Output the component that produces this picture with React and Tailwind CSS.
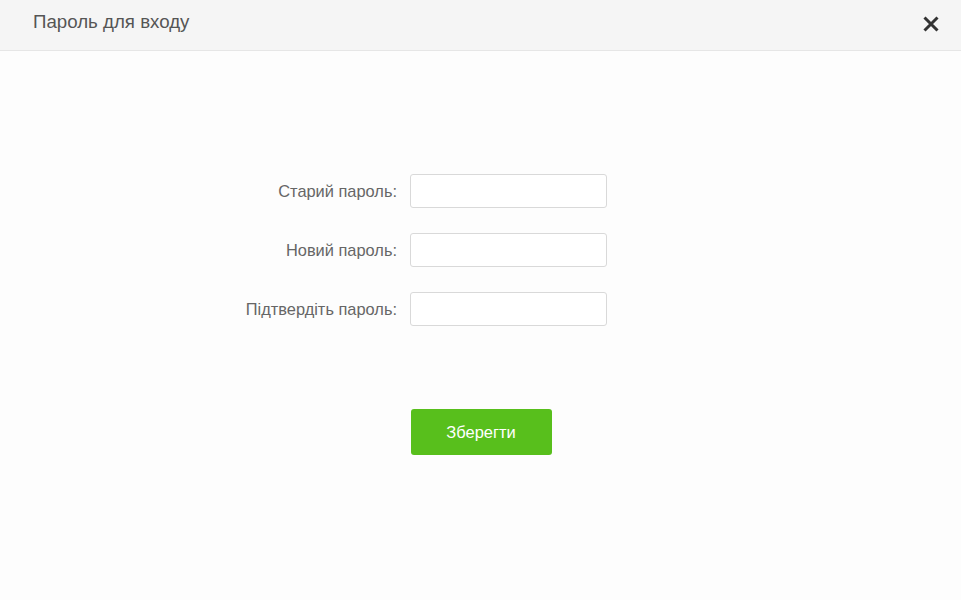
export default function App() {
  return (
    <div className="w-[961px] h-[600px] bg-[#fdfdfd] flex flex-col" style={{ fontFamily: '"Liberation Sans", Arial, sans-serif' }}>
      <div className="h-[51px] shrink-0 bg-[#f5f5f5] border-b border-[#e6e6e6] flex items-center justify-between pl-[33px] pr-[21px]">
        <span className="text-[18.7px] text-[#555] pb-[5px]">Пароль для входу</span>
        <svg width="18" height="18" viewBox="0 0 18 18" className="mt-[-2px]">
          <path d="M2.5 2.5 L15.5 15.5 M15.5 2.5 L2.5 15.5" stroke="#333" strokeWidth="3" strokeLinecap="butt" />
        </svg>
      </div>
      <div className="flex flex-col pt-[123px]">
        <div className="flex flex-col gap-[25px] ml-[237px]">
          {['Старий пароль:', 'Новий пароль:', 'Підтвердіть пароль:'].map((l) => (
            <div key={l} className="flex items-center gap-[13px]">
              <label className="w-[160px] text-right text-[16.4px] text-[#666]">{l}</label>
              <input type="password" className="w-[197px] h-[34px] border border-[#d9d9d9] rounded-[3px] bg-white outline-none" />
            </div>
          ))}
        </div>
        <div className="flex justify-center mt-[83px]">
          <button className="w-[141px] h-[46px] rounded-[3px] bg-[#58bf1c] text-white text-[16.5px] ml-[1px] pt-[1px]">Зберегти</button>
        </div>
      </div>
    </div>
  );
}
